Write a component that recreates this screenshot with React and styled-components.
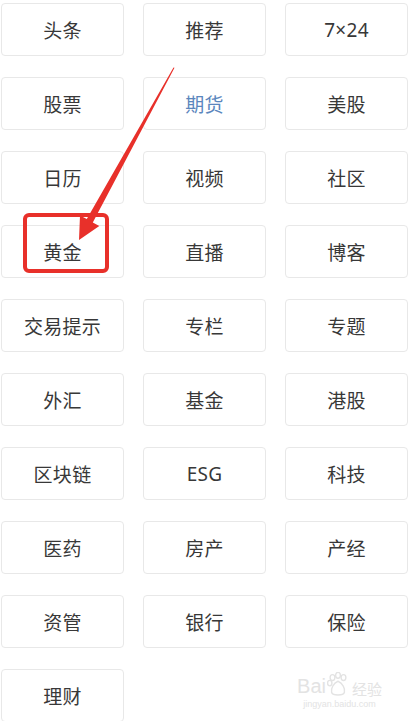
import React from 'react';
import styled, { createGlobalStyle } from 'styled-components';

const GlobalStyle = createGlobalStyle`
  html, body {
    margin: 0;
    padding: 0;
    background: #fff;
    overflow: hidden;
  }
  body {
    font-family: "Noto Sans", "Noto Sans CJK SC", sans-serif;
  }
`;

const Page = styled.div`
  position: relative;
  width: 410px;
  height: 721px;
  overflow: hidden;
  background: #fff;
`;

const Grid = styled.div`
  display: grid;
  grid-template-columns: repeat(3, 123px);
  grid-auto-rows: 53px;
  column-gap: 19px;
  row-gap: 21px;
  padding: 3px 2px 0 1px;
`;

const Tile = styled.div`
  display: flex;
  align-items: center;
  justify-content: center;
  box-sizing: border-box;
  border: 1px solid #e8e8e8;
  border-radius: 4px;
  background: #fff;
  font-size: 19px;
  letter-spacing: 0.3px;
  color: ${(p) => (p.active ? '#5b86bd' : '#383838')};
`;

const Overlay = styled.svg`
  position: absolute;
  left: 0;
  top: 0;
  pointer-events: none;
`;

const Watermark = styled.div`
  position: absolute;
  right: 28px;
  bottom: 12px;
  display: flex;
  flex-direction: column;
  align-items: center;
  color: #e3e3e3;
`;

const MarkTop = styled.div`
  display: flex;
  align-items: flex-end;
  gap: 1px;
  font-family: "Liberation Sans", sans-serif;
  font-size: 20px;
  line-height: 1;
`;

const MarkCn = styled.span`
  font-family: "Noto Sans CJK SC", sans-serif;
  font-size: 15px;
  margin-left: 2px;
`;

const MarkUrl = styled.div`
  font-family: "Liberation Sans", sans-serif;
  font-size: 9px;
  margin-top: 3px;
`;

const items = [
  '头条', '推荐', '7×24',
  '股票', '期货', '美股',
  '日历', '视频', '社区',
  '黄金', '直播', '博客',
  '交易提示', '专栏', '专题',
  '外汇', '基金', '港股',
  '区块链', 'ESG', '科技',
  '医药', '房产', '产经',
  '资管', '银行', '保险',
  '理财',
];

export default function App() {
  return (
    <Page>
      <GlobalStyle />
      <Grid>
        {items.map((t) => (
          <Tile key={t} active={t === '期货'}>{t}</Tile>
        ))}
      </Grid>
      <Overlay width="410" height="721" viewBox="0 0 410 721">
        <rect x="25" y="215" width="82" height="56" rx="4" fill="none" stroke="#e8302a" strokeWidth="4" />
        <polygon
          fill="#e8302a"
          points="174.5,67.8 173.5,67.4 86.8,219.1 80,215.4 79,240 99.3,226 92.8,222.4"
        />
      </Overlay>
      <Watermark>
        <MarkTop>
          <span>Bai</span>
          <svg width="22" height="24" viewBox="0 0 24 26">
            <ellipse cx="6" cy="6" rx="2.6" ry="3.2" fill="none" stroke="#e3e3e3" strokeWidth="1.5" />
            <ellipse cx="12" cy="3.5" rx="2.6" ry="3.2" fill="none" stroke="#e3e3e3" strokeWidth="1.5" />
            <ellipse cx="18" cy="6" rx="2.6" ry="3.2" fill="none" stroke="#e3e3e3" strokeWidth="1.5" />
            <ellipse cx="3" cy="12" rx="2.4" ry="3" fill="none" stroke="#e3e3e3" strokeWidth="1.5" />
            <path d="M12 10 C7 12 4 18 5 22 C6 26 18 26 19 22 C20 18 17 12 12 10 Z" fill="none" stroke="#e3e3e3" strokeWidth="1.5" />
          </svg>
          <MarkCn>经验</MarkCn>
        </MarkTop>
        <MarkUrl>jingyan.baidu.com</MarkUrl>
      </Watermark>
    </Page>
  );
}
